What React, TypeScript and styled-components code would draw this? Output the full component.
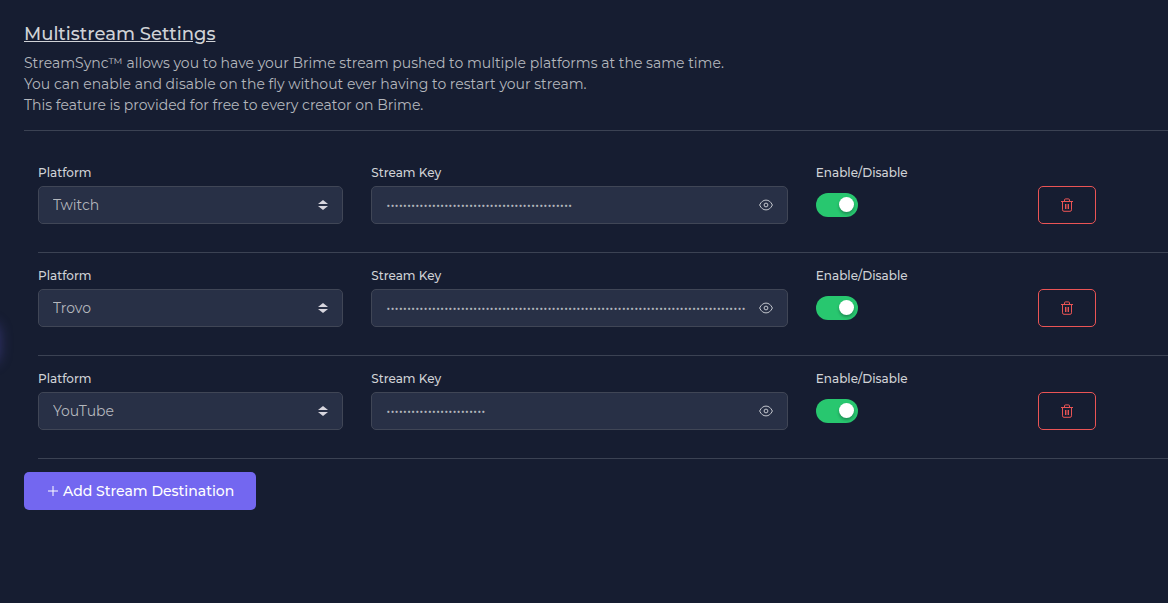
import React, { useState } from "react";
import styled, { createGlobalStyle } from "styled-components";

const GlobalStyle = createGlobalStyle`
  *, *::before, *::after { box-sizing: border-box; }
  body {
    margin: 0;
    background: #161d31;
    color: #b4b7bd;
    font-family: Montserrat, Inter, sans-serif;
    font-size: 14px;
    line-height: 21px;
    overflow-x: hidden;
  }
  button, input, select { font: inherit; color: inherit; }
`;

const Page = styled.main`
  position: relative;
  min-height: 100vh;
  padding: 23px 0 24px 24px;
`;

const EdgeGlow = styled.div`
  position: absolute;
  left: -36px;
  top: 324px;
  width: 34px;
  height: 38px;
  border-radius: 8px;
  box-shadow: 0 0 14px 1px rgba(115, 103, 240, 0.35);
`;

const Title = styled.h1`
  margin: 0 0 8px;
  color: #d0d2d6;
  font-size: 18px;
  line-height: 22px;
  font-weight: 500;
  text-decoration: underline;
`;

const Intro = styled.p`
  margin: 0;
`;

const Divider = styled.hr`
  margin: 14px 0 0;
  border: 0;
  border-top: 1px solid #3b4253;
`;

const Destinations = styled.ul`
  list-style: none;
  margin: 19px 0 13px;
  padding: 0;
`;

const Row = styled.li`
  display: grid;
  grid-template-columns: 3fr 4fr 2fr 144px;
  height: 103px;
`;

const RowLine = styled.div`
  grid-column: 1 / -1;
  align-self: end;
  margin-left: 14px;
  border-top: 1px solid #3b4253;
`;

const Cell = styled.div`
  display: flex;
  flex-direction: column;
  align-items: stretch;
  padding: 15px 14px 0;
`;

const Label = styled.label`
  color: #d0d2d6;
  font-size: 12px;
  font-weight: 500;
  line-height: 16px;
  margin-bottom: 5px;
  white-space: nowrap;
`;

const Field = styled.div`
  display: flex;
  align-items: center;
  height: 38px;
  border: 1px solid #404656;
  border-radius: 5px;
  background: #283046;
`;

const SelectField = styled(Field)`
  display: grid;
  > * { grid-area: 1 / 1; }
  > svg {
    justify-self: end;
    margin-right: 14px;
    pointer-events: none;
  }
`;

const Select = styled.select`
  appearance: none;
  width: 100%;
  height: 36px;
  padding: 0 32px 0 14px;
  border: 0;
  border-radius: 5px;
  outline: 0;
  background: #283046;
`;

const KeyInput = styled.input`
  flex: 1;
  min-width: 0;
  height: 36px;
  padding: 0;
  margin-left: 14px;
  border: 0;
  outline: 0;
  background: transparent;
`;

const RevealButton = styled.button`
  display: flex;
  align-items: center;
  padding: 0 14px 0 13px;
  height: 36px;
  border: 0;
  background: none;
  cursor: pointer;
`;

const Switch = styled.input`
  appearance: none;
  width: 42px;
  height: 24px;
  margin: 7px 0 0;
  border-radius: 12px;
  background: #3b4253;
  cursor: pointer;
  &::before {
    content: "";
    display: block;
    width: 15px;
    height: 15px;
    margin: 4px 0 0 4px;
    border-radius: 50%;
    background: #fff;
    box-shadow: 0 2px 3px rgba(11, 10, 25, 0.3);
  }
  &:checked { background: #28c76f; }
  &:checked::before { margin-left: 23px; }
`;

const DeleteButton = styled.button`
  display: flex;
  align-items: center;
  justify-content: center;
  width: 58px;
  height: 38px;
  margin-top: 21px;
  padding: 0;
  border: 1px solid #ea5455;
  border-radius: 5px;
  background: transparent;
  color: #ea5455;
  cursor: pointer;
`;

const AddButton = styled.button`
  display: inline-flex;
  align-items: center;
  gap: 5px;
  height: 38px;
  padding: 0 22px 0 24px;
  border: 0;
  border-radius: 5px;
  background: #7367f0;
  color: #fff;
  font-weight: 500;
  cursor: pointer;
`;

const SortIcon = () => (
  <svg width="10" height="10" viewBox="0 0 10 10" fill="#d8d6de" aria-hidden="true">
    <path d="M5 0 10 4H0zM5 10 0 6h10z" />
  </svg>
);

const EyeIcon = () => (
  <svg width="14" height="12" viewBox="0 0 14 12" fill="none" stroke="#c4c7ce" aria-hidden="true">
    <path d="M.6 6C2.2 2.700 4.300 1.100 7 1.100S11.800 2.700 13.400 6C11.800 9.300 9.700 10.900 7 10.900S2.200 9.300.6 6Z" />
    <circle cx="7" cy="6" r="1.900" />
  </svg>
);

const TrashIcon = () => (
  <svg width="12" height="14" viewBox="0 0 12 14" fill="none" stroke="currentColor" aria-hidden="true">
    <path d="M0 3.500h12M3.500 3.500V2Q3.500.9 4.600.9h2.800Q8.500.9 8.500 2v1.500M1.500 3.500v8.300q0 1.500 1.500 1.500h6q1.500 0 1.500-1.500V3.500M4.500 6v5M7.500 6v5" />
    <path d="M6 6v5" strokeWidth="2" opacity=".4" />
  </svg>
);

const PlusIcon = () => (
  <svg width="10" height="10" viewBox="0 0 10 10" stroke="currentColor" aria-hidden="true">
    <path d="M5 0v10M0 5h10" />
  </svg>
);

const platforms = ["Twitch", "Trovo", "YouTube"];

interface Destination {
  platform: string;
  key: string;
}

const initial: Destination[] = [
  { platform: "Twitch", key: "x".repeat(45) },
  { platform: "Trovo", key: "x".repeat(110) },
  { platform: "YouTube", key: "x".repeat(24) },
];

function DestinationRow({ item, id }: { item: Destination; id: string }) {
  const [visible, setVisible] = useState(false);
  return (
    <Row>
      <Cell>
        <Label htmlFor={`${id}-platform`}>Platform</Label>
        <SelectField>
          <Select id={`${id}-platform`} defaultValue={item.platform}>
            {platforms.map((p) => (
              <option key={p}>{p}</option>
            ))}
          </Select>
          <SortIcon />
        </SelectField>
      </Cell>
      <Cell>
        <Label htmlFor={`${id}-key`}>Stream Key</Label>
        <Field>
          <KeyInput id={`${id}-key`} type={visible ? "text" : "password"} defaultValue={item.key} />
          <RevealButton type="button" aria-label="Show stream key" onClick={() => setVisible(!visible)}>
            <EyeIcon />
          </RevealButton>
        </Field>
      </Cell>
      <Cell>
        <Label htmlFor={`${id}-enabled`}>Enable/Disable</Label>
        <Switch id={`${id}-enabled`} type="checkbox" role="switch" defaultChecked />
      </Cell>
      <Cell>
        <DeleteButton type="button" aria-label={`Delete ${item.platform}`}>
          <TrashIcon />
        </DeleteButton>
      </Cell>
      <RowLine />
    </Row>
  );
}

export default function App() {
  return (
    <>
      <GlobalStyle />
      <Page>
        <EdgeGlow />
        <Title>Multistream Settings</Title>
        <Intro>
          StreamSync™ allows you to have your Brime stream pushed to multiple platforms at the same time.
          <br />
          You can enable and disable on the fly without ever having to restart your stream.
          <br />
          This feature is provided for free to every creator on Brime.
        </Intro>
        <Divider />
        <Destinations>
          {initial.map((item, i) => (
            <DestinationRow key={item.platform} item={item} id={`destination-${i}`} />
          ))}
        </Destinations>
        <AddButton type="button">
          <PlusIcon />
          Add Stream Destination
        </AddButton>
      </Page>
    </>
  );
}
